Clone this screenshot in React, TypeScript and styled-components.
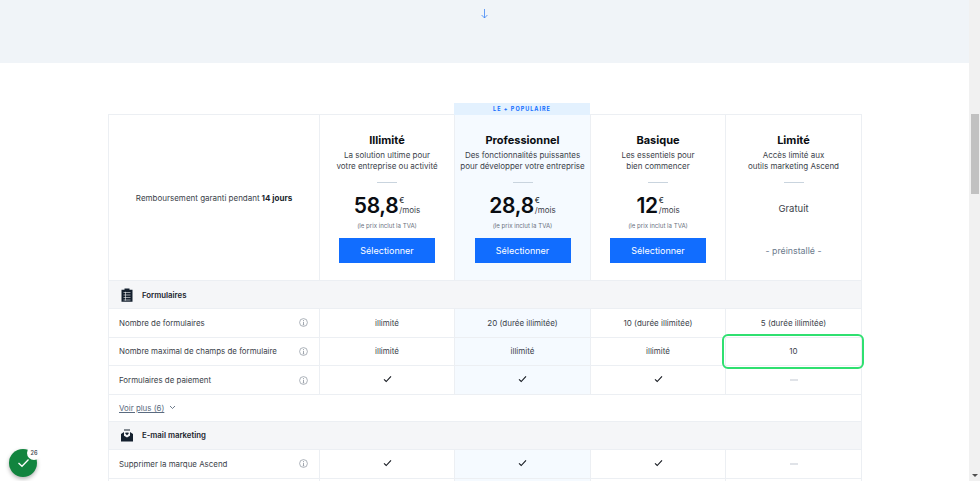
import React from "react";
import styled, { createGlobalStyle } from "styled-components";

const Global = createGlobalStyle`
  html, body { margin: 0; padding: 0; width: 980px; height: 481px; overflow: hidden; background: #fff; }
  body { font-family: "Inter", "Liberation Sans", sans-serif; color: #2f3440; }
  * { box-sizing: border-box; }
`;

const COLS = "211px 135px 136px 135px 137px";
const LINE = "#eceff3";

const Page = styled.div`
  position: relative;
  display: flex;
  width: 980px;
  height: 481px;
  overflow: hidden;
`;
const Main = styled.main`
  flex: 1;
  min-width: 0;
  display: flex;
  flex-direction: column;
`;
const Band = styled.div`
  height: 63px;
  flex: none;
  background: #f0f4f8;
  display: flex;
  justify-content: center;
  padding-top: 9px;
`;
const Content = styled.div`
  padding: 40px 0 0 108px;
`;
const TabRow = styled.div`
  display: grid;
  grid-template-columns: ${COLS};
  height: 11px;
`;
const Tab = styled.div`
  grid-column: 3;
  background: #e3f1fe;
  color: #116dff;
  font-size: 5.5px;
  font-weight: 700;
  letter-spacing: 1px;
  line-height: 13px;
  text-align: center;
`;
const Table = styled.div`
  width: 754px;
`;
const HeadRow = styled.div`
  display: grid;
  grid-template-columns: ${COLS};
  height: 166px;
  border-top: 1px solid ${LINE};
`;
const GuaranteeCell = styled.div`
  border-left: 1px solid ${LINE};
  display: flex;
  align-items: center;
  justify-content: center;
  font-size: 8px;
  color: #3b3f4a;
  b { font-weight: 700; margin-left: 2px; color: #20242c; }
`;
const Plan = styled.div<{ $hot?: boolean }>`
  border-left: 1px solid ${LINE};
  background: ${(p) => (p.$hot ? "#f5faff" : "#fff")};
  display: flex;
  flex-direction: column;
  align-items: center;
  padding-top: 18px;
  &:last-child { border-right: 1px solid ${LINE}; }
`;
const PlanName = styled.div`
  font-size: 11px;
  font-weight: 700;
  line-height: 15px;
  color: #0a0d12;
`;
const PlanDesc = styled.div`
  font-size: 8px;
  line-height: 10.5px;
  margin-top: 2px;
  height: 21px;
  text-align: center;
  white-space: nowrap;
  color: #3b3f4a;
`;
const Rule = styled.div`
  width: 20px;
  height: 1px;
  background: #c9d4de;
  margin-top: 11px;
  flex: none;
`;
const Price = styled.div`
  display: flex;
  align-items: flex-start;
  height: 26px;
  margin-top: 10px;
  flex: none;
  color: #0a0d12;
`;
const Amount = styled.span`
  font-size: 21px;
  font-weight: 600;
  line-height: 26px;
  letter-spacing: -0.3px;
`;
const PriceSide = styled.span`
  display: flex;
  flex-direction: column;
  margin-left: 1px;
`;
const Euro = styled.span`
  font-size: 7.5px;
  line-height: 9px;
  margin-top: 3px;
`;
const Per = styled.span`
  font-size: 8px;
  line-height: 10px;
  color: #3b3f4a;
`;
const Tax = styled.div`
  font-size: 6.1px;
  line-height: 8px;
  color: #6b7280;
  margin-top: 3px;
`;
const Select = styled.button`
  width: 96px;
  height: 25px;
  margin-top: 8px;
  border: 0;
  padding: 0;
  background: #116dff;
  color: #fff;
  font-family: inherit;
  font-size: 9px;
`;
const Free = styled.div`
  font-size: 9.5px;
  line-height: 12px;
  margin-top: 20px;
  color: #3b3f4a;
`;
const Preinstalled = styled.div`
  font-size: 8.8px;
  line-height: 12px;
  margin-top: 30px;
  color: #6b7a8c;
`;
const Section = styled.div`
  height: 29px;
  background: #f5f6f8;
  border: 1px solid ${LINE};
  display: flex;
  align-items: center;
  gap: 9px;
  padding-left: 12px;
  font-size: 7.8px;
  font-weight: 600;
  color: #20242c;
`;
const Row = styled.div`
  display: grid;
  grid-template-columns: ${COLS};
  height: 28.67px;
  border-bottom: 1px solid ${LINE};
`;
const Label = styled.div`
  border-left: 1px solid ${LINE};
  display: flex;
  align-items: center;
  justify-content: space-between;
  padding: 0 11px 0 10px;
  font-size: 7.9px;
  color: #3b3f4a;
  white-space: nowrap;
`;
const Cell = styled.div<{ $hot?: boolean; $mark?: boolean }>`
  position: relative;
  border-left: 1px solid ${LINE};
  background: ${(p) => (p.$hot ? "#f5faff" : "#fff")};
  display: flex;
  align-items: center;
  justify-content: center;
  font-size: 8px;
  color: #3b3f4a;
  &:last-child { border-right: 1px solid ${LINE}; }
  ${(p) =>
    p.$mark
      ? `&::after {
          content: "";
          position: absolute;
          z-index: 1;
          inset: -4px -3px -4px -4px;
          border: 2px solid #2fe070;
          border-radius: 6px;
        }`
      : ""}
`;
const Dash = styled.span`
  width: 8px;
  height: 1.5px;
  background: #e0e3e8;
`;
const More = styled.div`
  height: 26px;
  border-left: 1px solid ${LINE};
  border-right: 1px solid ${LINE};
  display: flex;
  align-items: center;
  gap: 5px;
  padding-left: 10px;
  font-size: 7.9px;
  color: #5a6b80;
  span { text-decoration: underline; }
`;
const ScrollTrack = styled.div`
  width: 11px;
  flex: none;
  background: #f1f1f1;
  display: flex;
  flex-direction: column;
  align-items: center;
  padding-top: 114px;
`;
const ScrollThumb = styled.div`
  width: 8px;
  height: 80px;
  background: #c1c1c1;
`;
const ScrollArrow = styled.div`
  margin-top: auto;
  margin-bottom: 4px;
  width: 0;
  height: 0;
  border-left: 3px solid transparent;
  border-right: 3px solid transparent;
  border-top: 3px solid #505050;
`;
const Floating = styled.div`
  position: absolute;
  left: 9px;
  top: 449px;
  width: 28px;
  height: 28px;
  border-radius: 50%;
  background: #12843f;
  box-shadow: 0 2px 4px rgba(0, 0, 0, 0.3);
  display: flex;
  align-items: center;
  justify-content: center;
`;
const Count = styled.div`
  position: absolute;
  left: 18px;
  top: -3px;
  width: 14px;
  height: 14px;
  border-radius: 50%;
  background: #fff;
  color: #4a4f58;
  font-size: 5.5px;
  font-weight: 600;
  display: flex;
  align-items: center;
  justify-content: center;
`;
const IconSvg = styled.svg`
  flex: none;
  display: block;
`;
const CheckSvg = styled(IconSvg)`
  margin-top: -2px;
`;

const Check = () => (
  <CheckSvg width="9" height="8" viewBox="0 0 9 8" fill="none">
    <path d="M1 4.4 L3.2 6.5 L8 1.3" stroke="#14181f" strokeWidth="1.1" />
  </CheckSvg>
);
const Info = () => (
  <IconSvg width="9" height="9" viewBox="0 0 9 9" fill="none">
    <circle cx="4.5" cy="4.5" r="3.9" stroke="#8a929c" strokeWidth="0.7" />
    <path d="M4.5 3.8V6.8M3.8 6.8h1.4" stroke="#8a929c" strokeWidth="0.8" />
    <circle cx="4.5" cy="2.5" r="0.5" fill="#8a929c" />
  </IconSvg>
);
const Clipboard = () => (
  <IconSvg width="12" height="14" viewBox="0 0 12 14">
    <path d="M3.5 0.5h5v1.2H11.5v12H.5V1.7H3.5z" fill="#14202e" />
    <path d="M2.5 4.5h7M2.5 7h7M2.5 9.5h7M2.5 12h7M4.5 3.8v8.8" stroke="#f5f6f8" strokeWidth="0.6" />
  </IconSvg>
);
const MailHeart = () => (
  <IconSvg width="12" height="13" viewBox="0 0 12 13">
    <path d="M0 5 L3 3 V0.5 H9 V3 L12 5 V12.5 H0 Z" fill="#14202e" />
    <path d="M3 1.5H9V6.8L6 8.6 3 6.8Z" fill="#f5f6f8" />
    <path d="M6 6.3 4.4 4.7C3.9 3.9 5.4 3 6 4 6.6 3 8.1 3.9 7.6 4.7Z" fill="#14202e" />
  </IconSvg>
);
const Chevron = () => (
  <IconSvg width="7" height="5" viewBox="0 0 7 5" fill="none">
    <path d="M1 1 L3.5 3.5 L6 1" stroke="#4a5a6e" strokeWidth="0.8" />
  </IconSvg>
);
const ArrowDown = () => (
  <IconSvg width="7" height="10" viewBox="0 0 7 10" fill="none">
    <path d="M3.5 0V9M.6 6 3.5 9 6.4 6" stroke="#3f87f5" strokeWidth="0.8" />
  </IconSvg>
);
const BigCheck = () => (
  <IconSvg width="13" height="10" viewBox="0 0 13 10" fill="none">
    <path d="M1.5 5 L5 8.3 L11.5 1.5" stroke="#fff" strokeWidth="1.3" />
  </IconSvg>
);

type V = "check" | "dash" | string;
const val = (v: V) => (v === "check" ? <Check /> : v === "dash" ? <Dash /> : v);

const FeatureRow = ({ label, values, mark, info = true }: { label: string; values: V[]; mark?: boolean; info?: boolean }) => (
  <Row>
    <Label>
      {label}
      {info && <Info />}
    </Label>
    {values.map((v, i) => (
      <Cell key={i} $hot={i === 1} $mark={mark && i === 3}>
        {val(v)}
      </Cell>
    ))}
  </Row>
);

const PaidPlan = ({ name, l1, l2, price, hot }: { name: string; l1: string; l2: string; price: string; hot?: boolean }) => (
  <Plan $hot={hot}>
    <PlanName>{name}</PlanName>
    <PlanDesc>
      {l1}
      <br />
      {l2}
    </PlanDesc>
    <Rule />
    <Price>
      <Amount>{price}</Amount>
      <PriceSide>
        <Euro>€</Euro>
        <Per>/mois</Per>
      </PriceSide>
    </Price>
    <Tax>(le prix inclut la TVA)</Tax>
    <Select>Sélectionner</Select>
  </Plan>
);

export default function App() {
  return (
    <Page>
      <Global />
      <Main>
        <Band>
          <ArrowDown />
        </Band>
        <Content>
          <TabRow>
            <Tab>LE + POPULAIRE</Tab>
          </TabRow>
          <Table>
            <HeadRow>
              <GuaranteeCell>
                Remboursement garanti pendant <b>14 jours</b>
              </GuaranteeCell>
              <PaidPlan name="Illimité" l1="La solution ultime pour" l2="votre entreprise ou activité" price="58,8" />
              <PaidPlan hot name="Professionnel" l1="Des fonctionnalités puissantes" l2="pour développer votre entreprise" price="28,8" />
              <PaidPlan name="Basique" l1="Les essentiels pour" l2="bien commencer" price="12" />
              <Plan>
                <PlanName>Limité</PlanName>
                <PlanDesc>
                  Accès limité aux
                  <br />
                  outils marketing Ascend
                </PlanDesc>
                <Rule />
                <Free>Gratuit</Free>
                <Preinstalled>- préinstallé -</Preinstalled>
              </Plan>
            </HeadRow>
            <Section>
              <Clipboard />
              Formulaires
            </Section>
            <FeatureRow label="Nombre de formulaires" values={["illimité", "20 (durée illimitée)", "10 (durée illimitée)", "5 (durée illimitée)"]} />
            <FeatureRow label="Nombre maximal de champs de formulaire" values={["illimité", "illimité", "illimité", "10"]} mark />
            <FeatureRow label="Formulaires de paiement" values={["check", "check", "check", "dash"]} />
            <More>
              <span>Voir plus (6)</span>
              <Chevron />
            </More>
            <Section>
              <MailHeart />
              E-mail marketing
            </Section>
            <FeatureRow label="Supprimer la marque Ascend" values={["check", "check", "check", "dash"]} />
            <FeatureRow label="" info={false} values={["", "", "", ""]} />
          </Table>
        </Content>
      </Main>
      <ScrollTrack>
        <ScrollThumb />
        <ScrollArrow />
      </ScrollTrack>
      <Floating>
        <BigCheck />
        <Count>26</Count>
      </Floating>
    </Page>
  );
}
